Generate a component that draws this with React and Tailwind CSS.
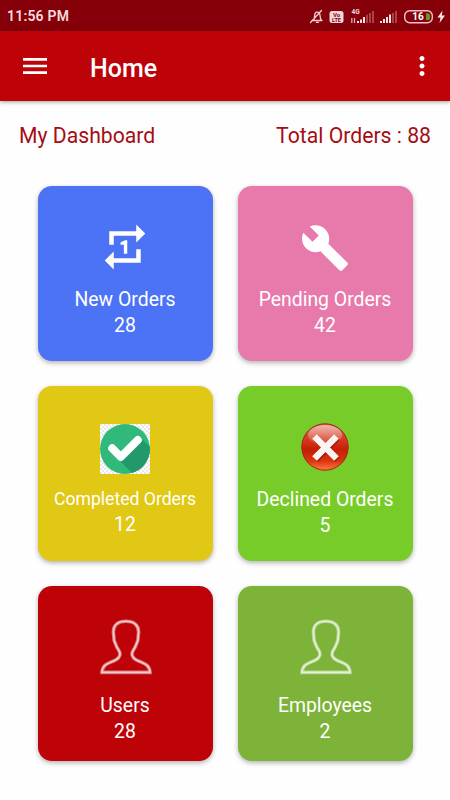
import { MdBuild, MdMenu, MdMoreVert, MdRepeatOne } from "react-icons/md";

const CheckImage = () => (
  <svg className="w-[50px] h-[50px]" viewBox="0 0 50 50">
    <defs>
      <pattern id="checker" width="4" height="4" patternUnits="userSpaceOnUse">
        <rect width="4" height="4" fill="#ffffff" />
        <rect width="2" height="2" fill="#e8e8ea" />
        <rect x="2" y="2" width="2" height="2" fill="#e8e8ea" />
      </pattern>
      <clipPath id="checkCircle">
        <circle cx="25" cy="25" r="25" />
      </clipPath>
    </defs>
    <rect width="50" height="50" fill="url(#checker)" />
    <circle cx="25" cy="25" r="25" fill="#31b97c" />
    <path
      d="M20 37 L41 14 L58 31 V60 H43 Z"
      fill="#22996a"
      clipPath="url(#checkCircle)"
    />
    <path
      d="M12.2 24.3 L20.8 33 L37.8 16"
      fill="none"
      stroke="#fff"
      strokeWidth="8"
      strokeLinecap="round"
      strokeLinejoin="round"
    />
  </svg>
);

const DeclinedImage = () => (
  <svg className="w-[50px] h-[50px]" viewBox="0 0 50 50">
    <defs>
      <linearGradient id="ball" x1="0" y1="0" x2="0" y2="1">
        <stop offset="0" stopColor="#e0614c" />
        <stop offset="0.4" stopColor="#d4301a" />
        <stop offset="0.55" stopColor="#c41e08" />
        <stop offset="0.8" stopColor="#dc3310" />
        <stop offset="1" stopColor="#ff7a45" />
      </linearGradient>
      <linearGradient id="gloss" x1="0" y1="0" x2="0" y2="1">
        <stop offset="0" stopColor="#fff" stopOpacity="0.55" />
        <stop offset="1" stopColor="#fff" stopOpacity="0.05" />
      </linearGradient>
    </defs>
    <circle cx="25" cy="25" r="23.2" fill="url(#ball)" stroke="#a52310" strokeWidth="1" />
    <ellipse cx="25" cy="13" rx="17" ry="10" fill="url(#gloss)" />
    <path
      d="M14.5 14.5 L36.5 36.5 M36.5 14.5 L14.5 36.5"
      stroke="#8c1505"
      strokeOpacity="0.7"
      strokeWidth="6.8"
      transform="translate(1 1)"
    />
    <path
      d="M14.5 14.5 L36.5 36.5 M36.5 14.5 L14.5 36.5"
      stroke="#faf5f3"
      strokeWidth="6.6"
    />
  </svg>
);

const personPath =
  "M26 2.3 C18 2.3 13.4 6 13.4 13 C13.4 15.5 14 17 13.9 19 C13.8 22.5 15.4 24 16.2 26.5 C17.2 30 20 31.5 20 35 C20 38.8 17.5 40.2 14 41.8 C8.5 44.2 2.4 45.5 2 53.4 H50 C49.6 45.5 43.5 44.2 38 41.8 C34.5 40.2 32 38.8 32 35 C32 31.5 34.8 30 35.8 26.5 C36.6 24 38.2 22.5 38.1 19 C38 17 38.6 15.5 38.6 13 C38.6 6 34 2.3 26 2.3 Z";

const PersonImage = () => (
  <svg className="w-[52px] h-[56px] ml-[2px]" viewBox="0 0 52 56" fill="none">
    <path d={personPath} stroke="#fff" strokeOpacity="0.45" strokeWidth="3.6" />
    <path d={personPath} stroke="#fff" strokeOpacity="0.65" strokeWidth="1.6" />
  </svg>
);

const cards = [
  {
    label: "New Orders",
    value: 28,
    color: "bg-[#4c72f5]",
    icon: <MdRepeatOne className="w-[54px] h-[54px]" />,
    iconBox: "h-[101px] pt-[34px]",
  },
  {
    label: "Pending Orders",
    value: 42,
    color: "bg-[#e77aab]",
    icon: <MdBuild className="w-[50px] h-[50px]" />,
    iconBox: "h-[101px] pt-[37px]",
  },
  {
    label: "Completed Orders",
    value: 12,
    color: "bg-[#e1c815]",
    icon: <CheckImage />,
    iconBox: "h-[101px] pt-[38px]",
    small: true,
  },
  {
    label: "Declined Orders",
    value: 5,
    color: "bg-[#78cc29]",
    icon: <DeclinedImage />,
    iconBox: "h-[101px] pt-[36px]",
  },
  {
    label: "Users",
    value: 28,
    color: "bg-[#be0308]",
    icon: <PersonImage />,
    iconBox: "h-[107px] pt-[33px]",
  },
  {
    label: "Employees",
    value: 2,
    color: "bg-[#7cb338]",
    icon: <PersonImage />,
    iconBox: "h-[107px] pt-[33px]",
  },
];

const StatusIcons = () => (
  <svg className="w-[140px] h-[20px]" viewBox="308 5 140 20" fill="none">
    {/* Muted bell */}
    <path
      d="M312 19.5 h10 M313.5 19 c1.5 -2 0.8 -5 1.6 -6.8 c0.8 -1.5 3.6 -1.5 4.4 0 c0.9 1.8 0.2 4.8 1.7 6.8 M316.3 21.3 h2.2 M310.5 21.5 L321.5 9.5"
      stroke="#f3cfd0"
      strokeWidth="1.3"
      strokeLinecap="round"
    />
    {/* VoLTE badge */}
    <rect x="329.5" y="10" width="14" height="12" rx="2.5" fill="#f3d6d7" />
    <text x="336.5" y="15.8" fontSize="6" fontWeight="700" textAnchor="middle" fill="#85030a">
      Vo
    </text>
    <text x="336.5" y="21.2" fontSize="5.5" fontWeight="700" textAnchor="middle" fill="#85030a">
      LTE
    </text>
    {/* Signal bars */}
    <text x="351.5" y="13" fontSize="6.5" fontWeight="700" fill="#f3d6d7">
      4G
    </text>
    <path d="M351.8 17v5M354.5 17v5" stroke="#e0a9ab" strokeWidth="1.3" />
    <path d="M358 20v2M361 18.5v3.5M364 16v6" stroke="#f7e3e3" strokeWidth="2" />
    <path d="M367 13.8v8.2M370 12v10M373 10v12" stroke="#b45357" strokeWidth="1.6" />
    <path d="M381 20v2M384 18v4M387 16v6M390 13.5v8.5" stroke="#f7e3e3" strokeWidth="2" />
    <path d="M393 12v10M396 10v12" stroke="#b45357" strokeWidth="1.6" />
    {/* Battery */}
    <path d="M426 12.3 h1.5 a2.5 2.5 0 0 1 2.5 2.5 v2 a2.5 2.5 0 0 1 -2.5 2.5 h-1.5 Z" fill="#5f9a2c" />
    <rect x="404.7" y="9.7" width="27.6" height="12" rx="5" stroke="#efc5c7" strokeWidth="1.4" />
    <text x="418" y="19.4" fontSize="10" fontWeight="700" textAnchor="middle" fill="#fff">
      16
    </text>
    <path d="M442.5 9.5 L437.5 16.5 H440.5 L439.5 22 L445 14.5 H441.8 Z" fill="#fbeaea" />
  </svg>
);

const App = () => {
  return (
    <div className="w-[450px] h-[800px] overflow-hidden bg-[#fefefe] font-['Roboto',sans-serif]">
      {/* Status bar */}
      <div className="h-[31px] bg-[#86000a] flex items-center justify-between pl-[7px] pr-[2px]">
        <span className="text-sm font-semibold text-[#f8dcdc] tracking-[0.2px] pt-px">
          11:56 PM
        </span>
        <StatusIcons />
      </div>

      {/* App bar */}
      <header className="h-[70px] bg-[#be0308] text-white flex items-center px-[19px] shadow-[0_1px_4px_rgba(0,0,0,0.4)]">
        <MdMenu className="w-8 h-8 -mt-px" />
        <h1 className="ml-[39px] mt-[5px] text-[25px] leading-8 font-medium">
          Home
        </h1>
        <MdMoreVert className="ml-auto -mr-[6px] w-[30px] h-[30px]" />
      </header>

      <div className="flex justify-between pl-[19px] pr-[19px] pt-[21px] h-[85px] text-[21.2px] leading-7 text-[#a50d12]">
        <h2>My Dashboard</h2>
        <p>Total Orders : 88</p>
      </div>

      {/* Cards */}
      <main className="grid grid-cols-2 gap-[25px] px-[37.5px]">
        {cards.map((card) => (
          <div
            key={card.label}
            className={`h-[175px] rounded-[14px] flex flex-col items-center text-white shadow-[0_2px_5px_rgba(0,0,0,0.3)] ${card.color}`}
          >
            <div className={card.iconBox}>{card.icon}</div>
            <p
              className={
                card.small
                  ? "text-[17.6px] leading-[25px]"
                  : "text-[19.4px] leading-[26px]"
              }
            >
              {card.label}
            </p>
            <p className="text-[19.4px] leading-[26px]">{card.value}</p>
          </div>
        ))}
      </main>
    </div>
  );
};

export default App;
